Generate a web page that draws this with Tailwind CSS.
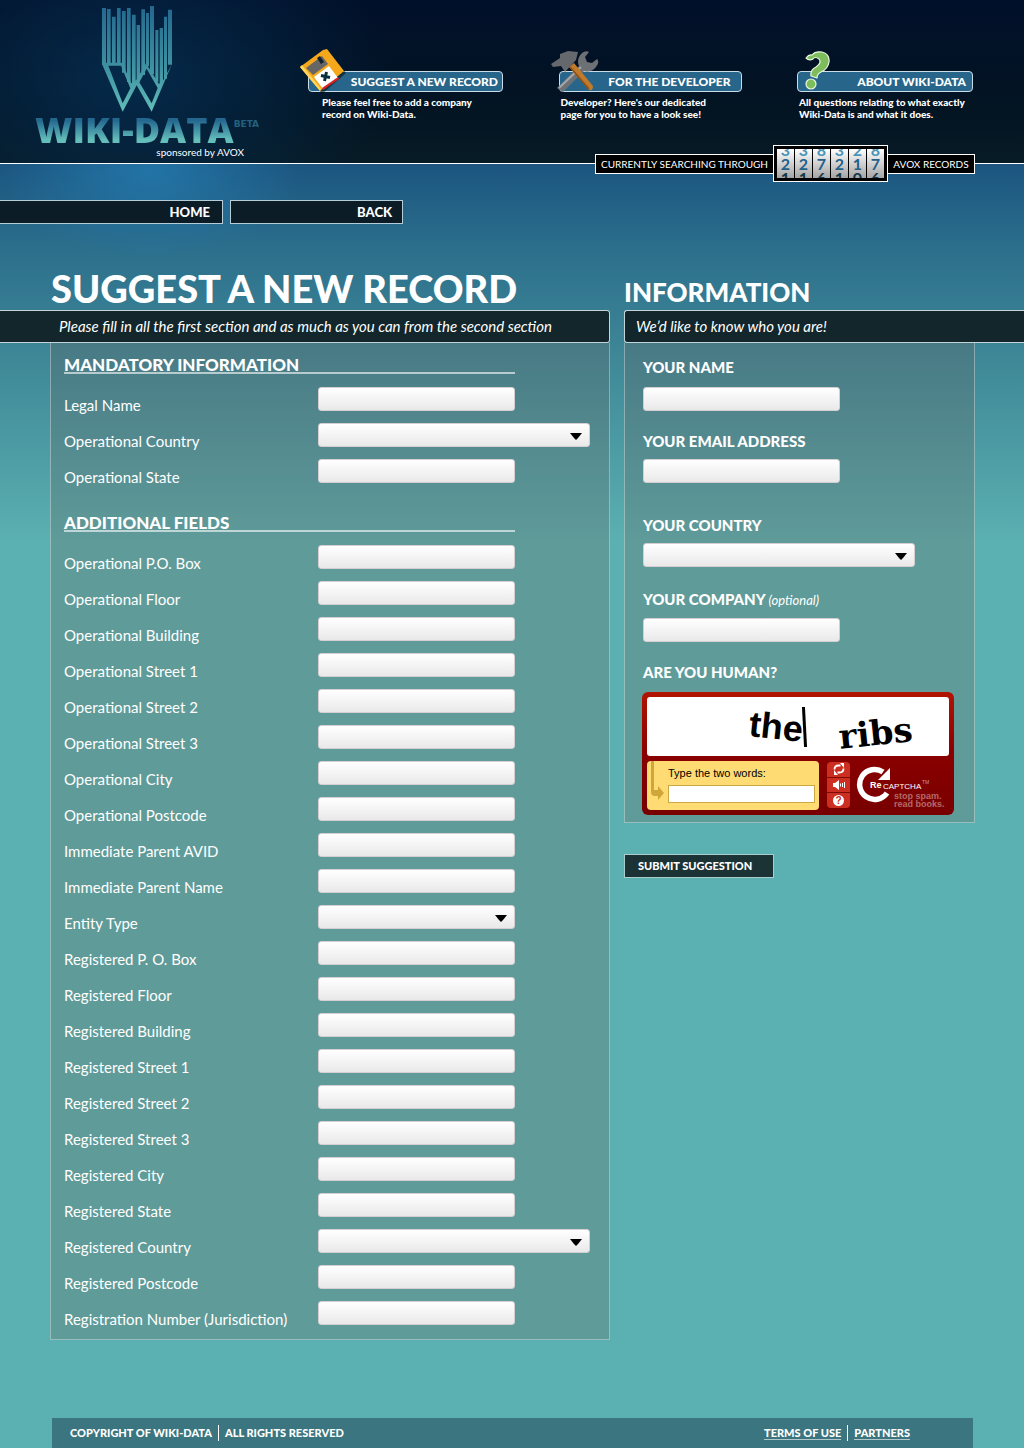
<!DOCTYPE html>
<html lang="en">
<head>
<meta charset="utf-8">
<meta name="viewport" content="width=device-width, initial-scale=1">
<title>Wiki-Data - Suggest a new record</title>
<script src="https://cdn.jsdelivr.net/npm/@tailwindcss/browser@4"></script>
</head>
<body class="min-h-screen flex flex-col bg-[#5bb0b1] bg-[radial-gradient(ellipse_150px_90px_at_150px_170px,#247bb0cc,#247bb000),linear-gradient(to_bottom,#1b5580_164px,#2c6f8c_250px,#3d8696_350px,#5bb0b1_540px)] bg-no-repeat font-['Lato','Liberation_Sans',sans-serif] text-white">

<header class="flex h-41 border-b border-white bg-[radial-gradient(ellipse_260px_170px_at_130px_80px,#052a4b,#052a4b00),linear-gradient(to_bottom,#01102a,#031422_70%,#071b26)]">
  <a href="#" class="flex w-[272px] shrink-0 flex-col pl-[35px] pt-1">
    <svg class="ml-[65px] h-[110px] w-[74px]" viewBox="240 12 222 330" aria-hidden="true">
      <defs><linearGradient id="lg" gradientUnits="userSpaceOnUse" x1="0" y1="20" x2="0" y2="335"><stop offset="0" stop-color="#24688f"/><stop offset=".6" stop-color="#3f93a2"/><stop offset="1" stop-color="#63bdb9"/></linearGradient></defs>
      <g fill="url(#lg)">
        <path d="M246 24h12v170h-12zM261 27h11v165h-11zM276 50h11v142h-11zM291 24h11v168h-11zM306 33h11v185h-11zM321 24h11v222h-11zM336 44h11v208h-11zM350 75h10v170h-10zM364 28h11v197h-11zM378 39h9v160h-9zM390 18h12v205h-12zM406 90h9v155h-9zM419 84h10v170h-10zM432 50h9v186h-9zM444 29h12v165h-12z"/>
        <path fill-rule="evenodd" d="M246 188H306L334 250L349 240L378 190L417 252L430 240L456 192L395 335L350 256L308 335L246 192ZM265 197L308 310L331 265L303 197ZM380 206L358 247L395 310L413 264Z"/>
      </g>
    </svg>
    <span class="flex items-start whitespace-nowrap">
      <span class="bg-linear-to-b from-[#24688f] from-20% to-[#63bdb9] to-80% bg-clip-text font-['Open_Sans',sans-serif] text-[36px] leading-8 font-extrabold text-transparent">WIKI-DATA</span>
      <span class="pt-1 font-['DejaVu_Sans',sans-serif] text-[9px] leading-3 font-bold text-[#24607f]">BETA</span>
    </span>
    <span class="mr-7 text-right text-[10px] leading-3">sponsored by AVOX</span>
  </a>

  <nav class="ml-9 mr-[51px] flex flex-1 justify-between gap-4 pt-[71px] text-[10px] leading-3 font-black whitespace-nowrap">
    <a href="#" class="relative block w-[195px]">
      <svg class="absolute -left-2 -top-[22px] h-12 w-12" viewBox="0 0 48 48" aria-hidden="true">
        <path d="M2 19L27 1L45 23L21 44Z" fill="#000" opacity=".5" transform="translate(1 1)"/>
        <path d="M0 18L23 1L27 0L44 22L20 42Z" fill="#f5a81c"/><path d="M0 18L2 16L21 40L20 42Z" fill="#ffd75c"/>
        <path d="M6 19L22 7L28 15L13 26Z" fill="#666"/><path d="M17 9L20 7L24 13L21 15Z" fill="#13222e"/>
        <path d="M14 28L29 17L38 29L23 40Z" fill="#fff"/><path d="M22 39L38 28L39 30L23 41Z" fill="#d22"/>
        <path d="M21 26.500L30 28.500M26.500 23L24.500 32" stroke="#0b2d3c" stroke-width="3"/>
      </svg>
      <span class="block h-[21px] rounded-sm border border-[#c9dde6] bg-[#27668a] pr-1 text-right text-xs leading-[19px]">SUGGEST A NEW RECORD</span>
      <span class="mt-1 block pl-3.5">Please feel free to add a company<br>record on Wiki-Data.</span>
    </a>
    <a href="#" class="relative block w-[183px]">
      <svg class="absolute -left-2 -top-[22px] h-12 w-12" viewBox="0 0 48 48" aria-hidden="true">
        <path d="M6 39L28 17Q25 10 31 4Q35 1 38 3L34 8L36 13L41 14L46 10Q49 13 45 18Q40 24 33 22L12 43Z" fill="#6d7074"/>
        <path d="M8 39L30 18" stroke="#a3a7aa" stroke-width="2"/>
        <path d="M18 18L23 14L42 37Q42 42 38 41Z" fill="#c17a2b"/><path d="M19 18L38 40" stroke="#8a4f16" stroke-width="1.5"/>
        <path d="M0 15L9 9L9 5L17 2L27 3L25 11L14 23L10 17L2 18Z" fill="#65686c"/>
      </svg>
      <span class="block h-[21px] rounded-sm border border-[#c9dde6] bg-[#27668a] pr-2.5 text-right text-xs leading-[19px]">FOR THE DEVELOPER</span>
      <span class="mt-1 block pl-0.5">Developer? Here's our dedicated<br>page for you to have a look see!</span>
    </a>
    <a href="#" class="relative block w-[176px]">
      <svg class="absolute left-1 -top-5 h-10 w-8" viewBox="0 0 32 40" aria-hidden="true">
        <g fill="#7ebd5b" stroke="#eaf6e2" stroke-width="1.2" stroke-linejoin="round"><path d="M5 7Q8 3 11 4Q14 0 21 1Q29 3 28 11Q27 18 20 21Q16 23 16 27L10 25Q9 19 15 16Q21 12 18 8Q14 5 12 8Q8 10 5 7Z"/><circle cx="10" cy="33" r="5"/></g>
      </svg>
      <span class="block h-[21px] rounded-sm border border-[#c9dde6] bg-[#27668a] pr-1.5 text-right text-xs leading-[19px]">ABOUT WIKI-DATA</span>
      <span class="mt-1 block pl-0.5">All questions relating to what exactly<br>Wiki-Data is and what it does.</span>
    </a>
  </nav>
</header>

<div class="relative z-10 -mt-[19px] mr-[49px] flex items-center justify-end text-[10px]">
  <span class="h-5 w-[178px] border border-r-0 border-white bg-black text-center leading-[18px] whitespace-nowrap">CURRENTLY SEARCHING THROUGH</span>
  <span class="flex h-[37px] w-[115px] justify-center gap-px border border-white bg-black py-[3px] text-base leading-[14px] font-bold text-[#22618a]">
    <span class="flex w-[17px] flex-col items-center justify-center overflow-hidden bg-linear-to-b from-white to-[#a5a5a5]"><span class="text-[#4a94b8]">3</span><span>2</span><span class="text-[#12384d]">1</span></span>
    <span class="flex w-[17px] flex-col items-center justify-center overflow-hidden bg-linear-to-b from-white to-[#a5a5a5]"><span class="text-[#4a94b8]">3</span><span>2</span><span class="text-[#12384d]">1</span></span>
    <span class="flex w-[17px] flex-col items-center justify-center overflow-hidden bg-linear-to-b from-white to-[#a5a5a5]"><span class="text-[#4a94b8]">8</span><span>7</span><span class="text-[#12384d]">6</span></span>
    <span class="flex w-[17px] flex-col items-center justify-center overflow-hidden bg-linear-to-b from-white to-[#a5a5a5]"><span class="text-[#4a94b8]">3</span><span>2</span><span class="text-[#12384d]">1</span></span>
    <span class="flex w-[17px] flex-col items-center justify-center overflow-hidden bg-linear-to-b from-white to-[#a5a5a5]"><span class="text-[#4a94b8]">2</span><span>1</span><span class="text-[#12384d]">0</span></span>
    <span class="flex w-[17px] flex-col items-center justify-center overflow-hidden bg-linear-to-b from-white to-[#a5a5a5]"><span class="text-[#4a94b8]">8</span><span>7</span><span class="text-[#12384d]">6</span></span>
  </span>
  <span class="h-5 w-[87px] border border-l-0 border-white bg-black text-center leading-[18px] whitespace-nowrap">AVOX RECORDS</span>
</div>

<nav class="mt-[18px] flex gap-[7px] text-right text-[13px] leading-[22px] font-black">
  <a href="#" class="h-6 w-[223px] border border-l-0 border-[#b5cdd8] bg-[#0b1c27] pr-3">HOME</a>
  <a href="#" class="h-6 w-[173px] border border-[#b5cdd8] bg-[#0b1c27] pr-2.5">BACK</a>
</nav>

<form class="grid grid-cols-[610fr_400fr] gap-x-3.5 [&_input]:outline-none [&_select]:w-full [&_select]:appearance-none [&_select]:h-6 [&_select]:rounded-[3px] [&_select]:border [&_select]:border-[#d5cfd3] [&_select]:bg-linear-to-b [&_select]:from-white [&_select]:to-[#e9e9e9]">
  <main>
    <h1 class="flex h-[86px] items-end pb-0.5 pl-[51px] text-[38px] leading-10 font-black whitespace-nowrap">SUGGEST A NEW RECORD</h1>
    <p class="h-[33px] rounded-r-[3px] border border-l-0 border-[#c3d5d9] bg-[#12262b] pl-[59px] text-[15px] leading-[31px] italic">Please fill in all the first section and as much as you can from the second section</p>
    <div class="ml-[50px] border border-t-0 border-white/35 bg-[#6d5a55]/25 pt-3 pb-[2px] pl-[13px] text-[15px] [&_input]:h-6 [&_input]:w-[197px] [&_input]:rounded-[3px] [&_input]:border [&_input]:border-[#d5cfd3] [&_input]:bg-linear-to-b [&_input]:from-white [&_input]:to-[#e9e9e9] [&_label]:w-[254px] [&_label]:shrink-0 [&_label]:leading-9 [&_li]:flex [&_li]:h-9 [&_li]:items-start">
      <h2 class="mb-[13px] h-[19px] w-[451px] border-b-2 border-white/60 text-[17px] leading-5 font-black">MANDATORY INFORMATION</h2>
      <ul>
        <li><label for="legal">Legal Name</label><input id="legal" type="text"></li>
        <li><label for="ocountry">Operational Country</label><span class="relative w-[272px]"><select id="ocountry"><option></option></select><svg class="pointer-events-none absolute right-2 top-2.5 h-[7px] w-3" viewBox="0 0 12 7" aria-hidden="true"><path d="M0 0h12L8 5L6 7L4 5Z"/></svg></span></li>
        <li><label for="ostate">Operational State</label><input id="ostate" type="text"></li>
      </ul>
      <h2 class="mt-[18px] mb-[13px] h-[19px] w-[451px] border-b-2 border-white/60 text-[17px] leading-5 font-black">ADDITIONAL FIELDS</h2>
      <ul>
        <li><label for="f1">Operational P.O. Box</label><input id="f1" type="text"></li>
        <li><label for="f2">Operational Floor</label><input id="f2" type="text"></li>
        <li><label for="f3">Operational Building</label><input id="f3" type="text"></li>
        <li><label for="f4">Operational Street 1</label><input id="f4" type="text"></li>
        <li><label for="f5">Operational Street 2</label><input id="f5" type="text"></li>
        <li><label for="f6">Operational Street 3</label><input id="f6" type="text"></li>
        <li><label for="f7">Operational City</label><input id="f7" type="text"></li>
        <li><label for="f8">Operational Postcode</label><input id="f8" type="text"></li>
        <li><label for="f9">Immediate Parent AVID</label><input id="f9" type="text"></li>
        <li><label for="f10">Immediate Parent Name</label><input id="f10" type="text"></li>
        <li><label for="f11">Entity Type</label><span class="relative w-[197px]"><select id="f11"><option></option></select><svg class="pointer-events-none absolute right-2 top-2.5 h-[7px] w-3" viewBox="0 0 12 7" aria-hidden="true"><path d="M0 0h12L8 5L6 7L4 5Z"/></svg></span></li>
        <li><label for="f12">Registered P. O. Box</label><input id="f12" type="text"></li>
        <li><label for="f13">Registered Floor</label><input id="f13" type="text"></li>
        <li><label for="f14">Registered Building</label><input id="f14" type="text"></li>
        <li><label for="f15">Registered Street 1</label><input id="f15" type="text"></li>
        <li><label for="f16">Registered Street 2</label><input id="f16" type="text"></li>
        <li><label for="f17">Registered Street 3</label><input id="f17" type="text"></li>
        <li><label for="f18">Registered City</label><input id="f18" type="text"></li>
        <li><label for="f19">Registered State</label><input id="f19" type="text"></li>
        <li><label for="f20">Registered Country</label><span class="relative w-[272px]"><select id="f20"><option></option></select><svg class="pointer-events-none absolute right-2 top-2.5 h-[7px] w-3" viewBox="0 0 12 7" aria-hidden="true"><path d="M0 0h12L8 5L6 7L4 5Z"/></svg></span></li>
        <li><label for="f21">Registered Postcode</label><input id="f21" type="text"></li>
        <li><label for="f22">Registration Number (Jurisdiction)</label><input id="f22" type="text"></li>
      </ul>
    </div>
  </main>

  <aside>
    <h2 class="flex h-[86px] items-end text-[26px] leading-9 font-black">INFORMATION</h2>
    <p class="h-[33px] rounded-l-[3px] border border-r-0 border-[#c3d5d9] bg-[#12262b] pl-[11px] text-[15px] leading-[31px] italic">We’d like to know who you are!</p>
    <div class="mr-[49px] flex flex-col items-start border border-t-0 border-white/35 bg-[#6d5a55]/25 pt-3.5 pb-[7px] pl-[18px] text-[15px] leading-5 font-black">
      <label for="name" class="mb-2.5">YOUR NAME</label>
      <input id="name" type="text" class="h-6 w-[197px] rounded-[3px] border border-[#d5cfd3] bg-linear-to-b from-white to-[#e9e9e9]">
      <label for="email" class="mt-5 mb-2">YOUR EMAIL ADDRESS</label>
      <input id="email" type="email" class="h-6 w-[197px] rounded-[3px] border border-[#d5cfd3] bg-linear-to-b from-white to-[#e9e9e9]">
      <label for="country" class="mt-8 mb-2">YOUR COUNTRY</label>
      <span class="relative h-6 w-[272px]"><select id="country"><option></option></select><svg class="pointer-events-none absolute right-2 top-2.5 h-[7px] w-3" viewBox="0 0 12 7" aria-hidden="true"><path d="M0 0h12L8 5L6 7L4 5Z"/></svg></span>
      <label for="company" class="mt-[22px] mb-2">YOUR COMPANY <i class="text-[13px] font-normal">(optional)</i></label>
      <input id="company" type="text" class="h-6 w-[197px] rounded-[3px] border border-[#d5cfd3] bg-linear-to-b from-white to-[#e9e9e9]">
      <h3 class="mt-5 mb-2.5">ARE YOU HUMAN?</h3>

      <div class="-ml-px w-[312px] rounded-md bg-linear-to-b from-[#b11400] via-[#8a0000] via-50% to-[#780000] p-[5px] font-['Liberation_Sans',sans-serif] font-normal">
        <div class="flex h-[59px] items-center gap-8 rounded-[3px] bg-white pl-[102px] text-black">
          <span class="flex items-center text-[36px] leading-10 font-bold"><span class="rotate-6">the</span><span class="h-10 w-[3px] -rotate-3 bg-black"></span></span>
          <span class="-rotate-6 pt-3 font-['DejaVu_Serif',serif] text-[34px] leading-9 font-bold">ribs</span>
        </div>
        <div class="mt-[5px] flex h-[49px]">
          <div class="flex w-[172px] shrink-0 rounded-[4px] bg-[#ffdc73]">
            <svg class="h-10 w-[21px] shrink-0" viewBox="0 0 21 40" fill="#cfa63a" aria-hidden="true"><path d="M4 0h3v29h4v-4l6 7l-6 7v-4H8Q4 35 4 31Z"/></svg>
            <div class="pt-1">
              <label for="captcha" class="block text-[11px] leading-4 text-black">Type the two words:</label>
              <input id="captcha" type="text" class="mt-1 block h-[18px] w-[147px] border border-[#cca940] bg-white text-black">
            </div>
          </div>
          <div class="ml-2 mt-px flex h-[46px] w-[23px] shrink-0 flex-col gap-px overflow-hidden rounded-[4px] bg-[#7a0c00]">
            <button type="button" aria-label="New challenge" class="flex flex-1 items-center justify-center bg-[#cc2f22]"><svg class="h-3 w-3" viewBox="0 0 12 12" fill="none" stroke="#fff" stroke-width="1.8" aria-hidden="true"><path d="M1.500 6.500Q1.500 2.500 5.500 2.500H7.500M10.500 5.500Q10.500 9.500 6.500 9.500H4.500"/><path d="M7 0l4 0v5zM5 12l-4 0v-5z" fill="#fff" stroke="none"/></svg></button>
            <button type="button" aria-label="Audio challenge" class="flex flex-1 items-center justify-center bg-[#cc2f22]"><svg class="h-3 w-3.5" viewBox="0 0 14 12" aria-hidden="true"><path d="M1 4h2l4-3v10l-4-3H1z" fill="#fff"/><path d="M8.500 4.500v3M10.500 4v4M12.500 3v6" stroke="#fff"/></svg></button>
            <button type="button" aria-label="Help" class="flex flex-1 items-center justify-center bg-[#cc2f22]"><span class="h-[11px] w-[11px] rounded-full bg-white text-[10px] leading-[11px] font-bold text-[#cc2f22]">?</span></button>
          </div>
          <svg class="ml-1.5 h-[49px] w-[93px] shrink-0" viewBox="0 0 93 49" role="img" aria-label="reCAPTCHA">
            <path d="M31 32A15 15 0 1 1 27 11" fill="none" stroke="#fff" stroke-width="5.500"/><path d="M34 7v12H22z" fill="#fff"/>
            <text x="14" y="27" fill="#fff" font-family="Liberation Sans" font-size="9" font-weight="bold">Re</text>
            <text x="27" y="28" fill="#fff" font-family="Liberation Sans" font-size="8">CAPTCHA</text>
            <text x="66" y="23" fill="#c99" font-family="Liberation Sans" font-size="5">TM</text>
            <text x="38" y="38" fill="#b56a6a" font-family="Liberation Sans" font-size="9" font-weight="bold">stop spam.</text>
            <text x="38" y="46" fill="#b56a6a" font-family="Liberation Sans" font-size="9" font-weight="bold">read books.</text>
          </svg>
        </div>
      </div>
    </div>
    <button type="submit" class="mt-[31px] block h-6 w-[150px] border border-[#a9cccd] bg-[#1c3336] pl-[13px] text-left text-[11px] leading-[22px] font-black">SUBMIT SUGGESTION</button>
  </aside>
</form>

<footer class="mt-auto ml-[52px] mr-[51px] flex h-[30px] items-center gap-1.5 bg-[#3a7580] pl-[18px] pr-[63px] text-[11px] leading-3 font-black">
  <span>COPYRIGHT OF WIKI-DATA</span><span class="h-4 w-px bg-white"></span><span>ALL RIGHTS RESERVED</span>
  <a href="#" class="ml-auto border-b border-white/60">TERMS OF USE</a><span class="h-4 w-px bg-white"></span><a href="#" class="border-b border-white/60">PARTNERS</a>
</footer>
</body>
</html>
